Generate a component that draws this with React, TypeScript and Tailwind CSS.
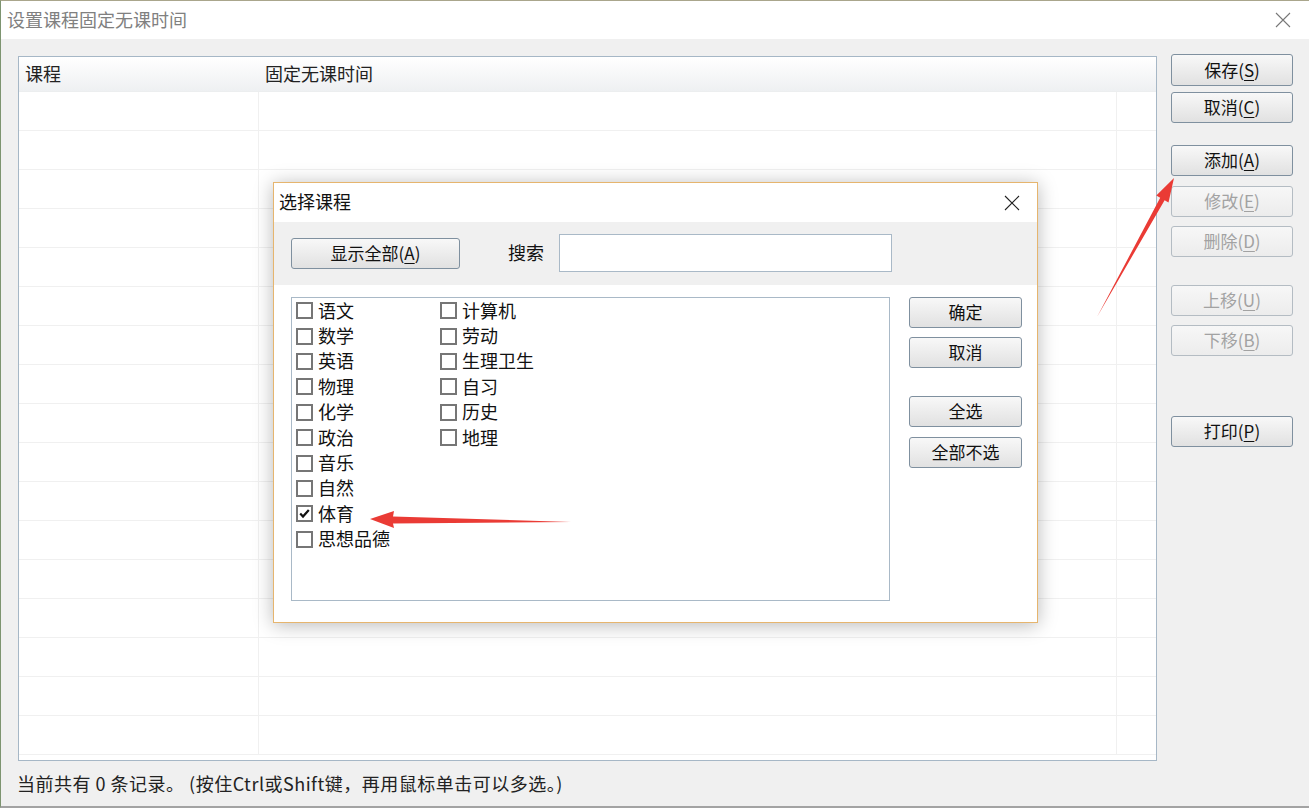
import React from "react";

const FONT = { fontFamily: '"Noto Sans CJK SC", "Microsoft YaHei", sans-serif' };

function Btn({
  label,
  mn,
  disabled,
  className = "",
}: {
  label: string;
  mn?: string;
  disabled?: boolean;
  className?: string;
}) {
  return (
    <div
      className={
        "flex items-center justify-center rounded-[3px] border text-[17px] leading-none " +
        (disabled
          ? "border-[#b4bcc3] bg-gradient-to-b from-[#f7f7f7] to-[#ececec] text-[#a2a2a2] "
          : "border-[#7f909f] bg-gradient-to-b from-[#f8f8f8] to-[#e1e1e1] text-[#111] ") +
        className
      }
    >
      <span className="pb-[2px]">
        {label}
        {mn ? (
          <>
            (<span className="underline underline-offset-[3px]">{mn}</span>)
          </>
        ) : null}
      </span>
    </div>
  );
}

function XIcon({ color, size = 16 }: { color: string; size?: number }) {
  return (
    <svg width={size} height={size} viewBox="0 0 16 16">
      <path d="M1 1 L15 15 M15 1 L1 15" stroke={color} strokeWidth="1.1" fill="none" />
    </svg>
  );
}

function Check({ label, checked }: { label: string; checked?: boolean }) {
  return (
    <div className="flex h-[25.4px] items-center">
      <div className="relative h-[17px] w-[17px] border-2 border-[#767676] bg-white">
        {checked ? (
          <svg className="absolute left-0 top-0" width="13" height="13" viewBox="0 0 13 13">
            <path d="M2.2 6.6 L5 9.6 L10.8 3" stroke="#111" strokeWidth="2.2" fill="none" />
          </svg>
        ) : null}
      </div>
      <span className="ml-[5px] pb-[2px] text-[18px] leading-none text-[#111]">{label}</span>
    </div>
  );
}

export default function App() {
  const rows = Array.from({ length: 17 });
  const col1 = ["语文", "数学", "英语", "物理", "化学", "政治", "音乐", "自然", "体育", "思想品德"];
  const col2 = ["计算机", "劳动", "生理卫生", "自习", "历史", "地理"];
  return (
    <div
      className="relative h-[808px] w-[1309px] overflow-hidden border-l border-t border-b-2 border-l-[#7d9470] border-t-[#aaa68c] border-b-[#a3a3a3] bg-[#f0f0f0]"
      style={FONT}
    >
      {/* title bar */}
      <div className="flex h-[38px] items-center bg-white pl-[6px]">
        <span className="pb-[2px] text-[18px] leading-none text-[#808080]">设置课程固定无课时间</span>
        <div className="ml-auto mr-[18px] flex items-center">
          <XIcon color="#777" />
        </div>
      </div>

      {/* body */}
      <div className="flex pl-[17px] pt-[17px]">
        <div className="flex h-[705px] w-[1139px] flex-col overflow-hidden border border-[#a6b7c6] bg-white">
          <div className="flex h-[35px] shrink-0 items-center border-b border-[#eceeef] bg-gradient-to-b from-white to-[#eef0f2] pb-[3px] text-[18px] leading-none text-[#222]">
            <div className="w-[240px] pl-[6px]">课程</div>
            <div className="pl-[6px]">固定无课时间</div>
          </div>
          {rows.map((_, i) => (
            <div key={i} className="flex h-[39px] shrink-0 border-b border-[#f0f0f0]">
              <div className="w-[240px] border-r border-[#f0f0f0]" />
              <div className="w-[858px] border-r border-[#f0f0f0]" />
              <div className="flex-1" />
            </div>
          ))}
        </div>

        <div className="ml-[14px] mt-[-2px] flex w-[122px] flex-col">
          <Btn label="保存" mn="S" className="h-[32px]" />
          <Btn label="取消" mn="C" className="mt-[6px] h-[31px]" />
          <Btn label="添加" mn="A" className="mt-[22px] h-[31px]" />
          <Btn label="修改" mn="E" disabled className="mt-[10px] h-[31px]" />
          <Btn label="删除" mn="D" disabled className="mt-[9px] h-[31px]" />
          <Btn label="上移" mn="U" disabled className="mt-[28px] h-[31px]" />
          <Btn label="下移" mn="B" disabled className="mt-[9px] h-[31px]" />
          <Btn label="打印" mn="P" className="mt-[60px] h-[31px]" />
        </div>
      </div>

      {/* status */}
      <div className="pl-[16px] pt-[13px] text-[18px] leading-none tracking-[0.5px] text-[#222]">
        当前共有 0 条记录。 (按住Ctrl或Shift键，再用鼠标单击可以多选。)
      </div>

      {/* modal dialog */}
      <div className="absolute left-[272px] top-[181px] flex h-[441px] w-[765px] flex-col border border-[#e6b56e] bg-white shadow-[0_2px_18px_rgba(0,0,0,0.28)]">
        <div className="flex h-[39px] shrink-0 items-center pl-[5px]">
          <span className="pb-[3px] text-[18px] leading-none text-[#111]">选择课程</span>
          <div className="ml-auto mr-[17px] flex items-center">
            <XIcon color="#222" />
          </div>
        </div>
        <div className="flex h-[63px] shrink-0 items-start bg-[#f0f0f0]">
          <Btn label="显示全部" mn="A" className="ml-[17px] mt-[16px] h-[31px] w-[169px]" />
          <span className="ml-[48px] mt-[21px] text-[18px] leading-none text-[#111]">搜索</span>
          <div className="ml-[15px] mt-[12px] h-[38px] w-[333px] border border-[#a9b9c7] bg-white" />
        </div>
        <div className="flex pl-[17px] pt-[12px]">
          <div className="flex h-[304px] w-[599px] border border-[#a9b9c7] bg-white pl-[4px] pt-0">
            <div className="flex w-[144px] flex-col">
              {col1.map((c) => (
                <Check key={c} label={c} checked={c === "体育"} />
              ))}
            </div>
            <div className="flex flex-col">
              {col2.map((c) => (
                <Check key={c} label={c} />
              ))}
            </div>
          </div>
          <div className="ml-[19px] flex w-[113px] flex-col">
            <Btn label="确定" className="h-[31px]" />
            <Btn label="取消" className="mt-[9px] h-[31px]" />
            <Btn label="全选" className="mt-[28px] h-[31px]" />
            <Btn label="全部不选" className="mt-[10px] h-[31px]" />
          </div>
        </div>
      </div>

      {/* annotation arrows */}
      <svg
        className="pointer-events-none absolute left-0 top-0"
        width="1309"
        height="808"
        viewBox="0 0 1309 808"
      >
        <polygon
          points="369,518 393,510 392,515.5 570,521 392,522.5 393,527"
          fill="#ea3b35"
        />
        <polygon
          points="1173,177 1167.5,201.4 1163.6,199.2 1096,316 1159.2,196.8 1155.3,194.6"
          fill="#ea3b35"
        />
      </svg>
    </div>
  );
}
